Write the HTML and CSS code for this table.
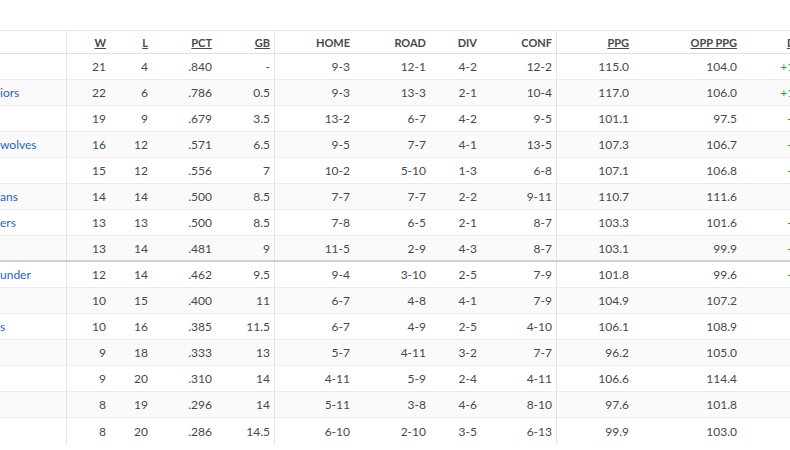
FILE: index.html
```html
<!DOCTYPE html>
<html lang="en">
<head>
<meta charset="utf-8">
<title>Standings</title>
<link rel="stylesheet" href="styles.css">
</head>
<body>
<div class="standings">
  <div class="table">
    <div class="row head">
      <div class="cell team"></div>
      <div class="cell"><a class="sort">W</a></div>
      <div class="cell"><a class="sort">L</a></div>
      <div class="cell"><a class="sort">PCT</a></div>
      <div class="cell sep"><a class="sort">GB</a></div>
      <div class="cell">HOME</div>
      <div class="cell">ROAD</div>
      <div class="cell">DIV</div>
      <div class="cell sep">CONF</div>
      <div class="cell"><a class="sort">PPG</a></div>
      <div class="cell"><a class="sort">OPP PPG</a></div>
      <div class="cell"><a class="sort">DIFF</a></div>
    </div>
    <div class="row"><div class="cell team"><a></a></div><div class="cell">21</div><div class="cell">4</div><div class="cell">.840</div><div class="cell sep">-</div><div class="cell">9-3</div><div class="cell">12-1</div><div class="cell">4-2</div><div class="cell sep">12-2</div><div class="cell">115.0</div><div class="cell">104.0</div><div class="cell pos">+11.0</div></div>
    <div class="row"><div class="cell team"><a>iors</a></div><div class="cell">22</div><div class="cell">6</div><div class="cell">.786</div><div class="cell sep">0.5</div><div class="cell">9-3</div><div class="cell">13-3</div><div class="cell">2-1</div><div class="cell sep">10-4</div><div class="cell">117.0</div><div class="cell">106.0</div><div class="cell pos">+11.0</div></div>
    <div class="row"><div class="cell team"><a></a></div><div class="cell">19</div><div class="cell">9</div><div class="cell">.679</div><div class="cell sep">3.5</div><div class="cell">13-2</div><div class="cell">6-7</div><div class="cell">4-2</div><div class="cell sep">9-5</div><div class="cell">101.1</div><div class="cell">97.5</div><div class="cell pos">+3.6</div></div>
    <div class="row"><div class="cell team"><a>wolves</a></div><div class="cell">16</div><div class="cell">12</div><div class="cell">.571</div><div class="cell sep">6.5</div><div class="cell">9-5</div><div class="cell">7-7</div><div class="cell">4-1</div><div class="cell sep">13-5</div><div class="cell">107.3</div><div class="cell">106.7</div><div class="cell pos">+0.6</div></div>
    <div class="row"><div class="cell team"><a></a></div><div class="cell">15</div><div class="cell">12</div><div class="cell">.556</div><div class="cell sep">7</div><div class="cell">10-2</div><div class="cell">5-10</div><div class="cell">1-3</div><div class="cell sep">6-8</div><div class="cell">107.1</div><div class="cell">106.8</div><div class="cell pos">+0.3</div></div>
    <div class="row"><div class="cell team"><a>ans</a></div><div class="cell">14</div><div class="cell">14</div><div class="cell">.500</div><div class="cell sep">8.5</div><div class="cell">7-7</div><div class="cell">7-7</div><div class="cell">2-2</div><div class="cell sep">9-11</div><div class="cell">110.7</div><div class="cell">111.6</div><div class="cell neg">-0.9</div></div>
    <div class="row"><div class="cell team"><a>ers</a></div><div class="cell">13</div><div class="cell">13</div><div class="cell">.500</div><div class="cell sep">8.5</div><div class="cell">7-8</div><div class="cell">6-5</div><div class="cell">2-1</div><div class="cell sep">8-7</div><div class="cell">103.3</div><div class="cell">101.6</div><div class="cell pos">+1.7</div></div>
    <div class="row cut"><div class="cell team"><a></a></div><div class="cell">13</div><div class="cell">14</div><div class="cell">.481</div><div class="cell sep">9</div><div class="cell">11-5</div><div class="cell">2-9</div><div class="cell">4-3</div><div class="cell sep">8-7</div><div class="cell">103.1</div><div class="cell">99.9</div><div class="cell pos">+3.2</div></div>
    <div class="row"><div class="cell team"><a>under</a></div><div class="cell">12</div><div class="cell">14</div><div class="cell">.462</div><div class="cell sep">9.5</div><div class="cell">9-4</div><div class="cell">3-10</div><div class="cell">2-5</div><div class="cell sep">7-9</div><div class="cell">101.8</div><div class="cell">99.6</div><div class="cell pos">+2.2</div></div>
    <div class="row"><div class="cell team"><a></a></div><div class="cell">10</div><div class="cell">15</div><div class="cell">.400</div><div class="cell sep">11</div><div class="cell">6-7</div><div class="cell">4-8</div><div class="cell">4-1</div><div class="cell sep">7-9</div><div class="cell">104.9</div><div class="cell">107.2</div><div class="cell neg">-2.3</div></div>
    <div class="row"><div class="cell team"><a>s</a></div><div class="cell">10</div><div class="cell">16</div><div class="cell">.385</div><div class="cell sep">11.5</div><div class="cell">6-7</div><div class="cell">4-9</div><div class="cell">2-5</div><div class="cell sep">4-10</div><div class="cell">106.1</div><div class="cell">108.9</div><div class="cell neg">-2.8</div></div>
    <div class="row"><div class="cell team"><a></a></div><div class="cell">9</div><div class="cell">18</div><div class="cell">.333</div><div class="cell sep">13</div><div class="cell">5-7</div><div class="cell">4-11</div><div class="cell">3-2</div><div class="cell sep">7-7</div><div class="cell">96.2</div><div class="cell">105.0</div><div class="cell neg">-8.8</div></div>
    <div class="row"><div class="cell team"><a></a></div><div class="cell">9</div><div class="cell">20</div><div class="cell">.310</div><div class="cell sep">14</div><div class="cell">4-11</div><div class="cell">5-9</div><div class="cell">2-4</div><div class="cell sep">4-11</div><div class="cell">106.6</div><div class="cell">114.4</div><div class="cell neg">-7.8</div></div>
    <div class="row"><div class="cell team"><a></a></div><div class="cell">8</div><div class="cell">19</div><div class="cell">.296</div><div class="cell sep">14</div><div class="cell">5-11</div><div class="cell">3-8</div><div class="cell">4-6</div><div class="cell sep">8-10</div><div class="cell">97.6</div><div class="cell">101.8</div><div class="cell neg">-4.2</div></div>
    <div class="row last"><div class="cell team"><a></a></div><div class="cell">8</div><div class="cell">20</div><div class="cell">.286</div><div class="cell sep">14.5</div><div class="cell">6-10</div><div class="cell">2-10</div><div class="cell">3-5</div><div class="cell sep">6-13</div><div class="cell">99.9</div><div class="cell">103.0</div><div class="cell neg">-3.1</div></div>
  </div>
</div>
</body>
</html>
```
FILE: styles.css
```css
html, body {
  margin: 0;
  padding: 0;
  background: #fff;
}
body {
  font-family: Lato, "Liberation Sans", sans-serif;
  color: #48494a;
  overflow: hidden;
}
.standings {
  width: 790px;
  padding-top: 30px;
  overflow: hidden;
}
.table {
  width: 815px;
  border-top: 1px solid #e6e6e6;
}
.row {
  display: grid;
  grid-template-columns: 67px 43px 42px 64px 59px 79px 76px 51px 76px 76px 108px 74px;
  height: 26px;
  box-sizing: border-box;
  border-bottom: 1px solid #ececec;
  font-size: 12px;
}
.row:nth-child(odd) {
  background: #fafafa;
}
.row.head {
  height: 23px;
  background: #fff;
  border-bottom: 1px solid #e1e1e1;
  font-size: 11px;
  font-weight: 700;
}
.row.cut {
  border-bottom: 2px solid #cfcfcf;
}
.row.last {
  border-bottom: none;
}
.cell {
  display: flex;
  align-items: center;
  justify-content: flex-end;
  padding-right: 4px;
  white-space: nowrap;
  overflow: hidden;
}
.cell.sep {
  border-right: 1px solid #e4e4e4;
}
.cell.team {
  justify-content: flex-start;
  padding-right: 0;
  border-right: 1px solid #e4e4e4;
}
.team a {
  color: #1f63d4;
  text-decoration: none;
}
.sort {
  text-decoration: underline;
  color: #48494a;
}
.pos {
  color: #27a043;
}
.neg {
  color: #e4532b;
}
```
